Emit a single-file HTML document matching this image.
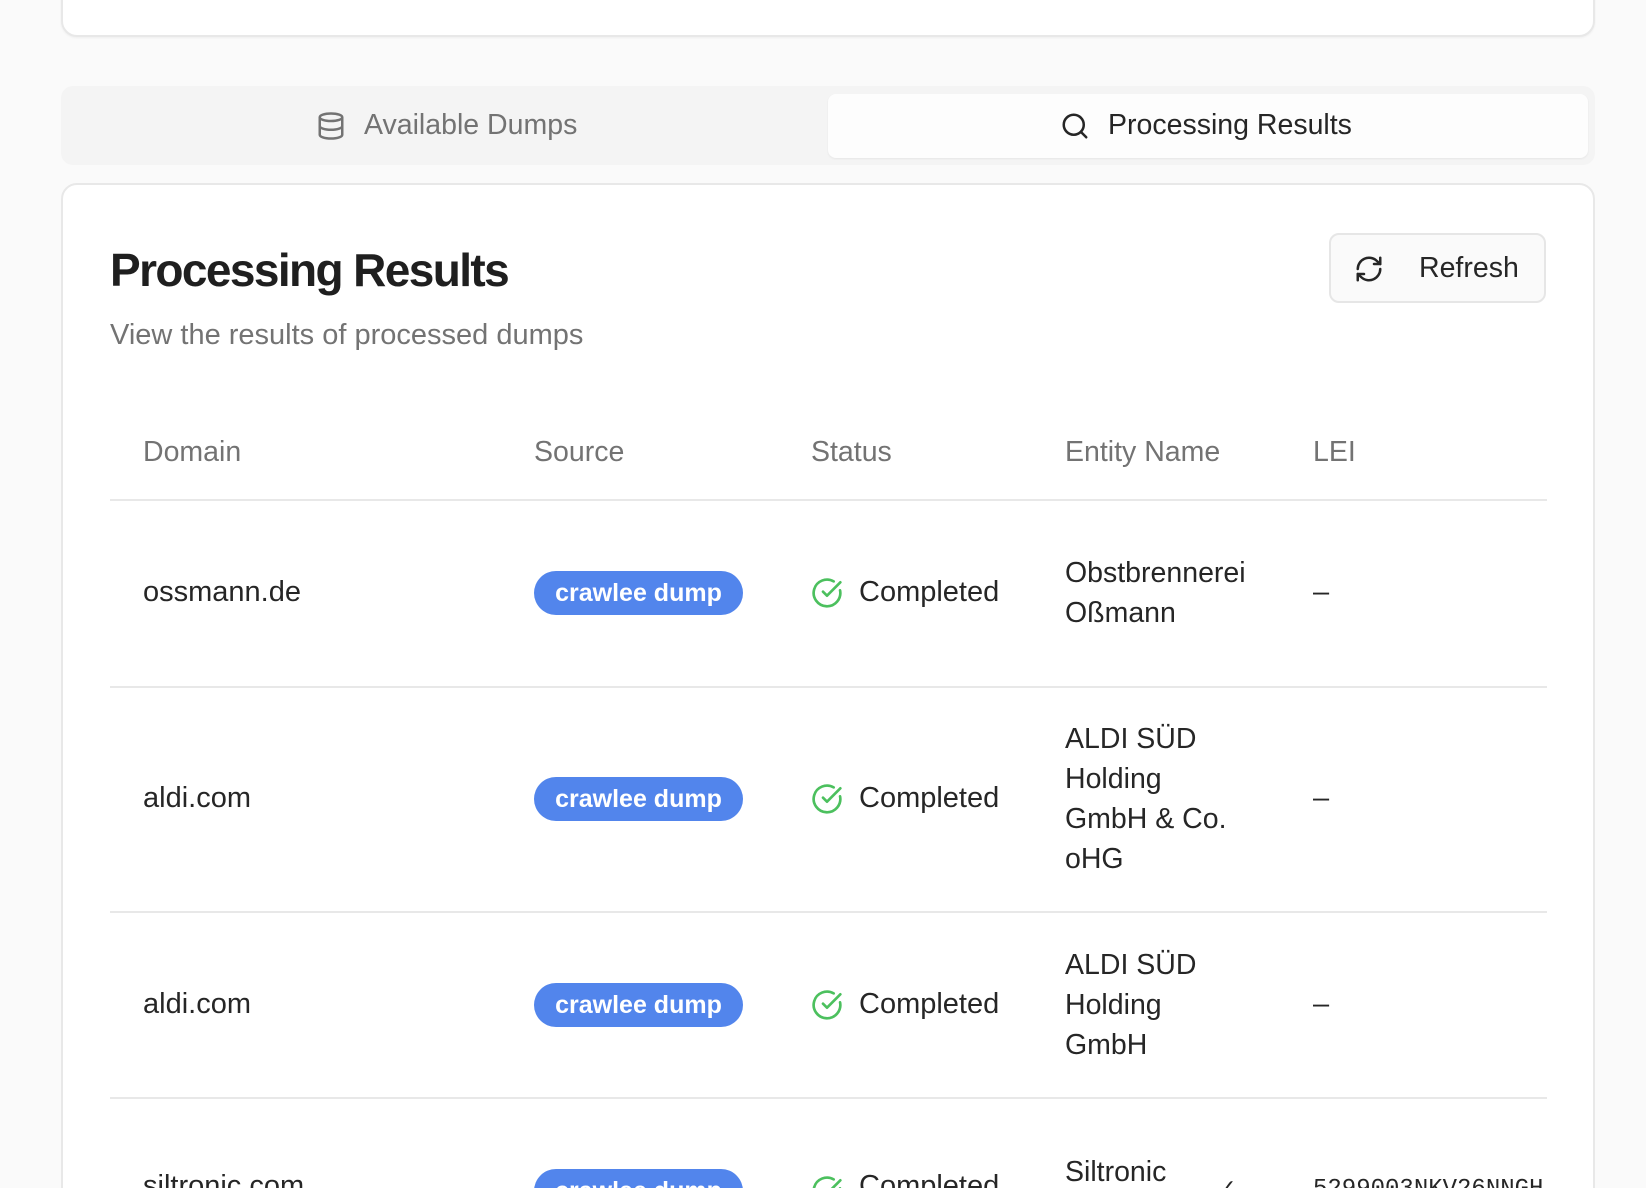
<!DOCTYPE html>
<html><head><meta charset="utf-8"><style>
*{margin:0;padding:0;box-sizing:border-box}
html,body{width:1646px;height:1188px;overflow:hidden}
body{background:#fafafa;font-family:"Liberation Sans",sans-serif;color:#262626;position:relative}
.a{position:absolute;white-space:nowrap}
.card{position:absolute;background:#fff;border:2px solid #e8e8e8;border-radius:16px}
.hd{font-size:28.5px;color:#737373;top:436px}
.cell{font-size:29px;color:#262626}
.badge{position:absolute;left:534px;width:209px;height:44px;border-radius:22px;background:#5285ec;color:#fff;font-size:25px;font-weight:bold;text-align:center;line-height:44px}
.line{position:absolute;left:110px;width:1437px;height:2px;background:#e8e8e8}
.ent{position:absolute;left:1065px;font-size:28.5px;line-height:40px;color:#262626}
</style></head><body>
<div class="card" style="left:61px;top:-20px;width:1534px;height:57px;box-shadow:0 1px 2px rgba(0,0,0,.05)"></div>
<div class="a" style="left:61px;top:86px;width:1534px;height:79px;background:#f4f4f4;border-radius:12px"></div>
<div class="a" style="left:828px;top:94px;width:760px;height:64px;background:#fdfdfd;border-radius:8px;box-shadow:0 1px 2px rgba(0,0,0,.06)"></div>
<svg class="a" style="left:316px;top:110px" width="30" height="32" viewBox="0 0 24 24" fill="none" stroke="#737373" stroke-width="2"><ellipse cx="12" cy="5" rx="9" ry="3"/><path d="M3 5v14c0 1.7 4 3 9 3s9-1.3 9-3V5"/><path d="M3 12c0 1.7 4 3 9 3s9-1.3 9-3"/></svg>
<div class="a" style="left:364px;top:109px;font-size:28.5px;color:#737373">Available Dumps</div>
<svg class="a" style="left:1060px;top:111px" width="30" height="30" viewBox="0 0 24 24" fill="none" stroke="#262626" stroke-width="2" stroke-linecap="round"><circle cx="11" cy="11" r="8"/><path d="M21 21l-4.3-4.3"/></svg>
<div class="a" style="left:1108px;top:109px;font-size:28.5px;color:#262626">Processing Results</div>

<div class="card" style="left:61px;top:183px;width:1534px;height:1040px"></div>
<div class="a" style="left:110px;top:243px;font-size:46px;font-weight:bold;letter-spacing:-1.6px;color:#1f1f1f">Processing Results</div>
<div class="a" style="left:110px;top:319px;font-size:29px;color:#737373">View the results of processed dumps</div>
<div class="a" style="left:1329px;top:233px;width:217px;height:70px;border:2px solid #e6e6e6;border-radius:10px;background:#fafafa"></div>
<svg class="a" style="left:1354px;top:254px" width="30" height="30" viewBox="0 0 24 24" fill="none" stroke="#262626" stroke-width="2" stroke-linecap="round" stroke-linejoin="round"><path d="M3 12a9 9 0 0 1 15-6.7L21 8"/><path d="M21 3v5h-5"/><path d="M21 12a9 9 0 0 1-15 6.7L3 16"/><path d="M8 16H3v5"/></svg>
<div class="a" style="left:1419px;top:252px;font-size:28.5px;color:#262626">Refresh</div>

<div class="a hd" style="left:143px">Domain</div>
<div class="a hd" style="left:534px">Source</div>
<div class="a hd" style="left:811px">Status</div>
<div class="a hd" style="left:1065px">Entity Name</div>
<div class="a hd" style="left:1313px">LEI</div>
<div class="line" style="top:499px"></div>

<div class="a cell" style="left:143px;top:576px">ossmann.de</div>
<div class="badge" style="top:571px">crawlee dump</div>
<div class="ent" style="top:553px">Obstbrennerei<br>Oßmann</div>
<div class="a cell" style="left:1313px;top:576px">–</div>
<div class="line" style="top:686px"></div>

<div class="a cell" style="left:143px;top:782px">aldi.com</div>
<div class="badge" style="top:777px">crawlee dump</div>
<div class="ent" style="top:719px">ALDI SÜD<br>Holding<br>GmbH &amp; Co.<br>oHG</div>
<div class="a cell" style="left:1313px;top:782px">–</div>
<div class="line" style="top:911px"></div>

<div class="a cell" style="left:143px;top:988px">aldi.com</div>
<div class="badge" style="top:983px">crawlee dump</div>
<div class="ent" style="top:945px">ALDI SÜD<br>Holding<br>GmbH</div>
<div class="a cell" style="left:1313px;top:988px">–</div>
<div class="line" style="top:1097px"></div>

<div class="a cell" style="left:143px;top:1170px">siltronic.com</div>
<div class="badge" style="top:1169px">crawlee dump</div>
<div class="ent" style="top:1152px">Siltronic</div>
<div class="a cell" style="left:1218px;top:1175px;font-size:22px">✓</div>
<div class="a" style="left:1313px;top:1176px;font-size:24px;font-family:'Liberation Mono',monospace;width:232px;overflow:hidden">5299003NKV26NNGH</div>

<svg class="a" style="left:811px;top:577px" width="32" height="32" viewBox="0 0 24 24" fill="none" stroke="#4cc05e" stroke-width="2" stroke-linecap="round" stroke-linejoin="round"><path d="M21.8 10A10 10 0 1 1 17 3.3"/><path d="M9 11l3 3L22 4"/></svg>
<div class="a cell" style="left:859px;top:576px">Completed</div>
<svg class="a" style="left:811px;top:783px" width="32" height="32" viewBox="0 0 24 24" fill="none" stroke="#4cc05e" stroke-width="2" stroke-linecap="round" stroke-linejoin="round"><path d="M21.8 10A10 10 0 1 1 17 3.3"/><path d="M9 11l3 3L22 4"/></svg>
<div class="a cell" style="left:859px;top:782px">Completed</div>
<svg class="a" style="left:811px;top:989px" width="32" height="32" viewBox="0 0 24 24" fill="none" stroke="#4cc05e" stroke-width="2" stroke-linecap="round" stroke-linejoin="round"><path d="M21.8 10A10 10 0 1 1 17 3.3"/><path d="M9 11l3 3L22 4"/></svg>
<div class="a cell" style="left:859px;top:988px">Completed</div>
<svg class="a" style="left:811px;top:1175px" width="32" height="32" viewBox="0 0 24 24" fill="none" stroke="#4cc05e" stroke-width="2" stroke-linecap="round" stroke-linejoin="round"><path d="M21.8 10A10 10 0 1 1 17 3.3"/><path d="M9 11l3 3L22 4"/></svg>
<div class="a cell" style="left:859px;top:1170px">Completed</div>
</body></html>
